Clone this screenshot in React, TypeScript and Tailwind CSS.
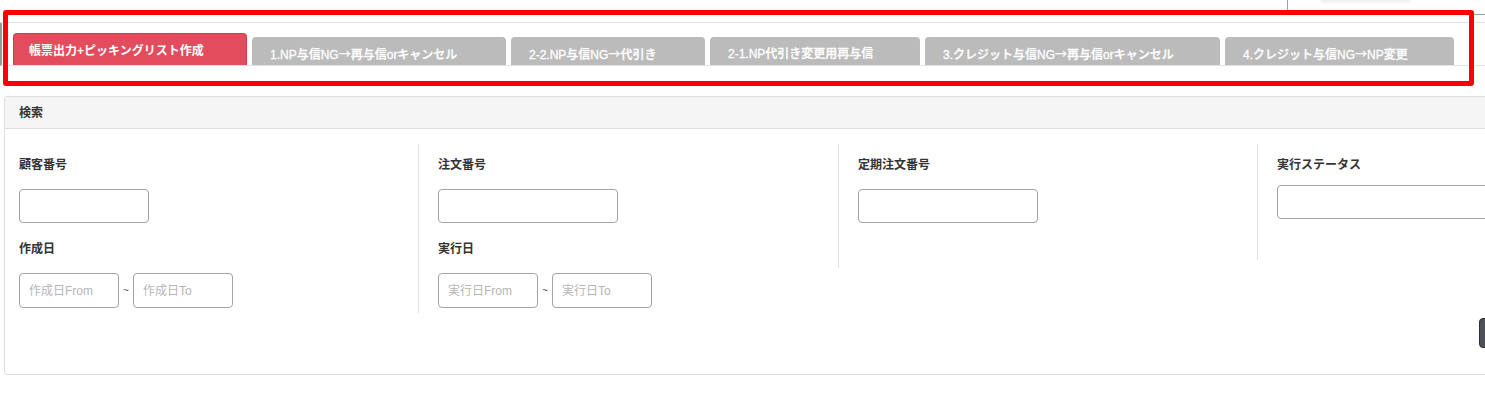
import React from "react";

const tabs = [
  { label: "1.NP与信NG→再与信orキャンセル", w: "w-[254px]" },
  { label: "2-2.NP与信NG→代引き", w: "w-[194px]" },
  { label: "2-1.NP代引き変更用再与信", w: "w-[210px]" },
  { label: "3.クレジット与信NG→再与信orキャンセル", w: "w-[295px]" },
  { label: "4.クレジット与信NG→NP変更", w: "w-[229px]" },
];

function WithArrow({ text }: { text: string }) {
  const parts = text.split("→");
  return (
    <>
      {parts.map((p, i) => (
        <React.Fragment key={i}>
          {i > 0 && <span className="font-['Noto_Sans_CJK_JP'] font-normal">→</span>}
          {p}
        </React.Fragment>
      ))}
    </>
  );
}

function TextInput({ w }: { w: string }) {
  return <div className={`${w} h-[34px] rounded-[4px] border border-[#a3a3a3] bg-white`} />;
}

function DateRange({ a, b }: { a: string; b: string }) {
  return (
    <div className="flex items-center">
      <div className="w-[100px] h-[35px] rounded-[4px] border border-[#a3a3a3] flex items-center pl-[9px] text-[12px] text-[#b5b5b5]">{a}</div>
      <div className="w-[14px] text-center text-[10px] text-[#555] leading-none">~</div>
      <div className="w-[100px] h-[35px] rounded-[4px] border border-[#a3a3a3] flex items-center pl-[9px] text-[12px] text-[#b5b5b5]">{b}</div>
    </div>
  );
}

function Label({ children }: { children: React.ReactNode }) {
  return <div className="text-[12px] leading-[18px] font-bold text-[#333]">{children}</div>;
}

export default function App() {
  return (
    <div
      className="relative w-[1485px] h-[398px] bg-white overflow-hidden"
      style={{ fontFamily: '"Liberation Sans", "Noto Sans CJK JP", sans-serif' }}
    >
      {/* top strip */}
      <div className="h-[23px] flex justify-end border-b border-[#e3e3e3]">
        <div className="w-[198px] h-[15px] border-l border-b border-[#a0a0a0] relative">
          <div className="absolute left-[33px] top-0 w-[90px] h-[3px] rounded-b-[3px] bg-[#f2f2f2]" />
        </div>
      </div>

      {/* tab bar */}
      <div className="h-[43px] flex items-end gap-[5px] pl-[11px] border-b border-[#e3e3e3] border-l-2 border-l-[#9a9a9a]">
        <div className="w-[234px] h-[32px] rounded-t-[4px] bg-[#e24c5c] border border-[#d23d4d] border-b-0 pl-[15px] pt-[8px] text-[12px] leading-[18px] font-bold text-white whitespace-nowrap">
          帳票出力+ピッキングリスト作成
        </div>
        {tabs.map((t) => (
          <div
            key={t.label}
            className={`${t.w} h-[28px] rounded-t-[4px] bg-[#bbbbbb] pl-[18px] pt-[8px] text-[12px] leading-[18px] font-medium text-white whitespace-nowrap [-webkit-text-stroke:0.3px_white]`}
          >
            <WithArrow text={t.label} />
          </div>
        ))}
      </div>

      {/* search panel */}
      <div className="mt-[30px] ml-[4px] w-[1577px] rounded-[3px] border border-[#dedede]">
        <div className="h-[32px] bg-[#f5f5f5] border-b border-[#dedede] pl-[14px] flex items-center text-[12px] font-bold text-[#333]">
          検索
        </div>
        <div className="pt-[15px]">
          <div className="flex items-start">
            <div className="w-[413px] pl-[14px] pt-[12px] pb-[5px]">
              <Label>顧客番号</Label>
              <div className="mt-[15px]">
                <TextInput w="w-[130px]" />
              </div>
              <div className="mt-[17px]">
                <Label>作成日</Label>
              </div>
              <div className="mt-[15px]">
                <DateRange a="作成日From" b="作成日To" />
              </div>
            </div>
            <div className="w-[420px] border-l border-[#e3e3e3] pl-[19px] pt-[12px] pb-[5px]">
              <Label>注文番号</Label>
              <div className="mt-[15px]">
                <TextInput w="w-[180px]" />
              </div>
              <div className="mt-[17px]">
                <Label>実行日</Label>
              </div>
              <div className="mt-[15px]">
                <DateRange a="実行日From" b="実行日To" />
              </div>
            </div>
            <div className="w-[419px] border-l border-[#e3e3e3] pl-[19px] pt-[12px] pb-[45px]">
              <Label>定期注文番号</Label>
              <div className="mt-[15px]">
                <TextInput w="w-[180px]" />
              </div>
            </div>
            <div className="w-[300px] border-l border-[#e3e3e3] pl-[19px] pt-[12px] pb-[41px]">
              <Label>実行ステータス</Label>
              <div className="mt-[11px]">
                <TextInput w="w-[260px]" />
              </div>
            </div>
          </div>
          <div className="flex justify-end pr-[15px] mt-[5px] pb-[26px]">
            <div className="w-[86px] h-[30px] rounded-[4px] bg-[#4b5059] border border-[#3d2a2c]" />
          </div>
        </div>
      </div>

      {/* annotation overlay */}
      <div className="absolute left-[3px] top-[10px] w-[1471px] h-[76px] border-[5px] border-[#ff0000] rounded-[3px] pointer-events-none" />
    </div>
  );
}
